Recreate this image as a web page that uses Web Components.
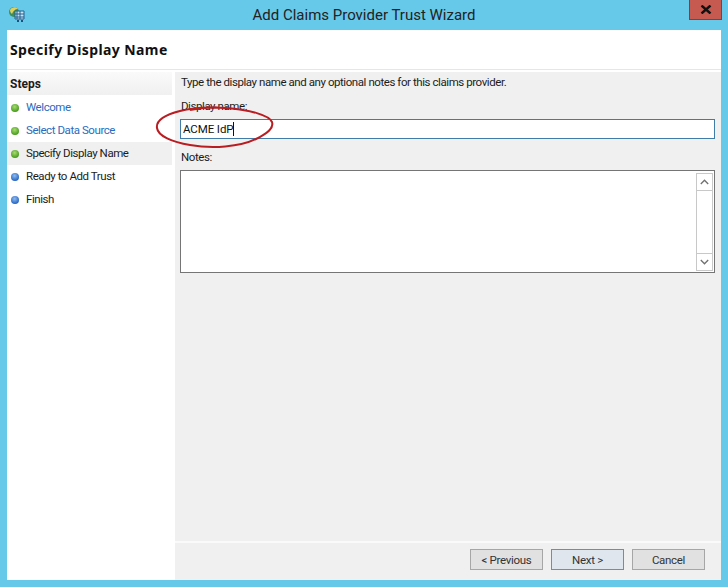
<!DOCTYPE html>
<html>
<head>
<style>
html,body{margin:0;padding:0;background:#67c9ea;}
body{font-family:Roboto,"Liberation Sans",sans-serif;font-size:11.5px;color:#1c1c1c;}
</style>
</head>
<body>
<wizard-window>
  <step-item slot="steps" state="done" link>Welcome</step-item>
  <step-item slot="steps" state="done" link>Select Data Source</step-item>
  <step-item slot="steps" state="done" current>Specify Display Name</step-item>
  <step-item slot="steps" state="todo">Ready to Add Trust</step-item>
  <step-item slot="steps" state="todo">Finish</step-item>
  <wiz-button slot="buttons">&lt; Previous</wiz-button>
  <wiz-button slot="buttons" primary>Next &gt;</wiz-button>
  <wiz-button slot="buttons">Cancel</wiz-button>
</wizard-window>
<script>
class StepItem extends HTMLElement{
  constructor(){
    super();
    this.attachShadow({mode:'open'});
  }
  connectedCallback(){
    const done = this.getAttribute('state') === 'done';
    const c1 = done ? '#a8dc70' : '#8dbcf0';
    const c2 = done ? '#3a9414' : '#1a5abc';
    const id = done ? 'g' : 'b';
    this.shadowRoot.innerHTML = `
    <style>
      :host{display:flex;align-items:center;box-sizing:border-box;height:23px;padding:0 0 1px 4px;letter-spacing:-.43px;}
      :host([link]){color:#2a6cc0;}
      :host([current]){background:#f0f0f0;}
      svg{width:8px;height:8px;margin:1px 7px 0 0;flex:none;}
    </style>
    <svg viewBox="0 0 8 8"><defs><radialGradient id="${id}" cx=".45" cy=".35" r=".7"><stop offset="0" stop-color="${c1}"/><stop offset="1" stop-color="${c2}"/></radialGradient></defs><circle cx="4" cy="4" r="4" fill="url(#${id})"/></svg>
    <slot></slot>`;
  }
}
customElements.define('step-item', StepItem);

class WizButton extends HTMLElement{
  constructor(){
    super();
    this.attachShadow({mode:'open'});
    this.shadowRoot.innerHTML = `
    <style>
      :host{display:flex;align-items:center;justify-content:center;box-sizing:border-box;width:73px;height:21px;background:#e1e1e1;border:1px solid #a6a6a6;color:#333;letter-spacing:-.3px;}
      :host([primary]){background:#dfe6ee;border-color:#5b93c4;}
    </style>
    <slot></slot>`;
  }
}
customElements.define('wiz-button', WizButton);

class WizardWindow extends HTMLElement{
  constructor(){
    super();
    this.attachShadow({mode:'open'});
    this.shadowRoot.innerHTML = `
    <style>
      :host{display:flex;flex-direction:column;position:relative;width:728px;height:587px;overflow:hidden;background:#67c9ea;}
      .bar{display:flex;align-items:center;justify-content:center;flex:none;height:30px;font-size:15px;color:#222;position:relative;}
      .icon{position:absolute;left:8px;top:6px;width:18px;height:17px;}
      .close{position:absolute;left:689px;top:0;width:33px;height:20px;box-sizing:border-box;background:#c75a50;border:1px solid #59504f;border-top:none;display:flex;align-items:center;justify-content:center;}
      .client{flex:none;margin:0 7px;width:714px;height:550px;background:#fff;display:flex;flex-direction:column;}
      .head{flex:none;height:40px;display:flex;align-items:center;padding-left:3px;box-sizing:border-box;font:700 14px "Noto Sans",sans-serif;letter-spacing:.4px;color:#111;border-bottom:1px solid #e6e6e6;}
      .main{flex:1;display:flex;min-height:0;padding-top:2px;}
      .side{flex:none;width:165px;margin-right:3px;}
      .side h3{margin:0;height:23px;display:flex;align-items:center;padding-left:3px;font-size:12px;font-weight:700;color:#1c1c1c;background:linear-gradient(#fafafa,#f0f0f0);}
      .side .gap{height:1px;}
      .panel{flex:1;background:#f0f0f0;display:flex;flex-direction:column;min-width:0;letter-spacing:-.43px;}
      .body{flex:1;display:flex;flex-direction:column;padding:2px 6px 0 5px;}
      .intro{height:16px;line-height:16px;padding-left:1px;}
      label{display:block;line-height:16px;padding-left:1px;}
      .name{box-sizing:border-box;height:20px;width:535px;background:#fff;border:1px solid #417ca8;display:flex;align-items:center;padding-left:2px;margin-top:5px;color:#111;letter-spacing:-.1px;}
      .caret{width:1px;height:14px;background:#111;}
      .notes{box-sizing:border-box;height:103px;width:535px;background:#fff;border:1px solid #757575;margin-top:5px;display:flex;justify-content:flex-end;padding:2px 1px 1px 0;}
      .scroll{box-sizing:border-box;width:17px;border:1px solid #c8c8c8;display:flex;flex-direction:column;justify-content:space-between;}
      .scroll div{height:16px;display:flex;align-items:center;justify-content:center;}
      .scroll div:first-child{border-bottom:1px solid #c8c8c8;}
      .scroll div:last-child{border-top:1px solid #c8c8c8;}
      .foot{flex:none;height:39px;border-top:2px solid #fafafa;display:flex;gap:8px;padding:6px 16px 0 0;justify-content:flex-end;box-sizing:border-box;}
      .ring{position:absolute;left:150px;top:100px;width:130px;height:54px;pointer-events:none;}
    </style>
    <div class="bar">
      <svg class="icon" viewBox="0 0 18 17">
        <circle cx="6" cy="6" r="5" fill="#3f8e5a"/>
        <path d="M2 4C3 1 8 0 10 3 7 3 5 5 4 8 3 7 2 6 2 4z" fill="#e2cf5c"/>
        <path d="M7 5h9v8H7z" fill="#cfe3f2" stroke="#23608f"/>
        <path d="M9 5v8M12 5v8M7 8h9M7 11h9" stroke="#23608f" fill="none"/>
        <path d="M9 15h2M13 15h2" stroke="#1d4f7c" stroke-width="2"/>
      </svg>
      <span style="margin-top:-1px">Add Claims Provider Trust Wizard</span>
      <div class="close"><svg width="12" height="9" viewBox="0 0 12 9"><path d="M1.5 .5l9 8M10.500 .5l-9 8" stroke="#111" stroke-width="2.400"/></svg></div>
    </div>
    <div class="client">
      <div class="head">Specify Display Name</div>
      <div class="main">
        <div class="side">
          <h3>Steps</h3>
          <div class="gap"></div>
          <slot name="steps"></slot>
        </div>
        <div class="panel">
          <div class="body">
            <div class="intro">Type the display name and any optional notes for this claims provider.</div>
            <label style="margin-top:8px">Display name:</label>
            <div class="name">ACME IdP<span class="caret"></span></div>
            <label style="margin-top:10px">Notes:</label>
            <div class="notes">
              <div class="scroll">
                <div><svg width="9" height="6" viewBox="0 0 9 6"><path d="M.8 5L4.500 1.200 8.200 5" stroke="#707070" stroke-width="1.300" fill="none"/></svg></div>
                <div><svg width="9" height="6" viewBox="0 0 9 6"><path d="M.8 1L4.500 4.800 8.200 1" stroke="#707070" stroke-width="1.300" fill="none"/></svg></div>
              </div>
            </div>
          </div>
          <div class="foot"><slot name="buttons"></slot></div>
        </div>
      </div>
    </div>
    <svg class="ring" viewBox="150 100 130 54"><path d="M244 110C222 106 196 107 180 111 164 115 156 121 157 128 158 136 172 142 190 145 212 149 240 147 256 139 268 133 274 128 272 122 269 115 250 110 226 108 212 107 200 108 190 110" fill="none" stroke="#b81d22" stroke-width="2"/></svg>`;
  }
}
customElements.define('wizard-window', WizardWindow);
</script>
</body>
</html>
